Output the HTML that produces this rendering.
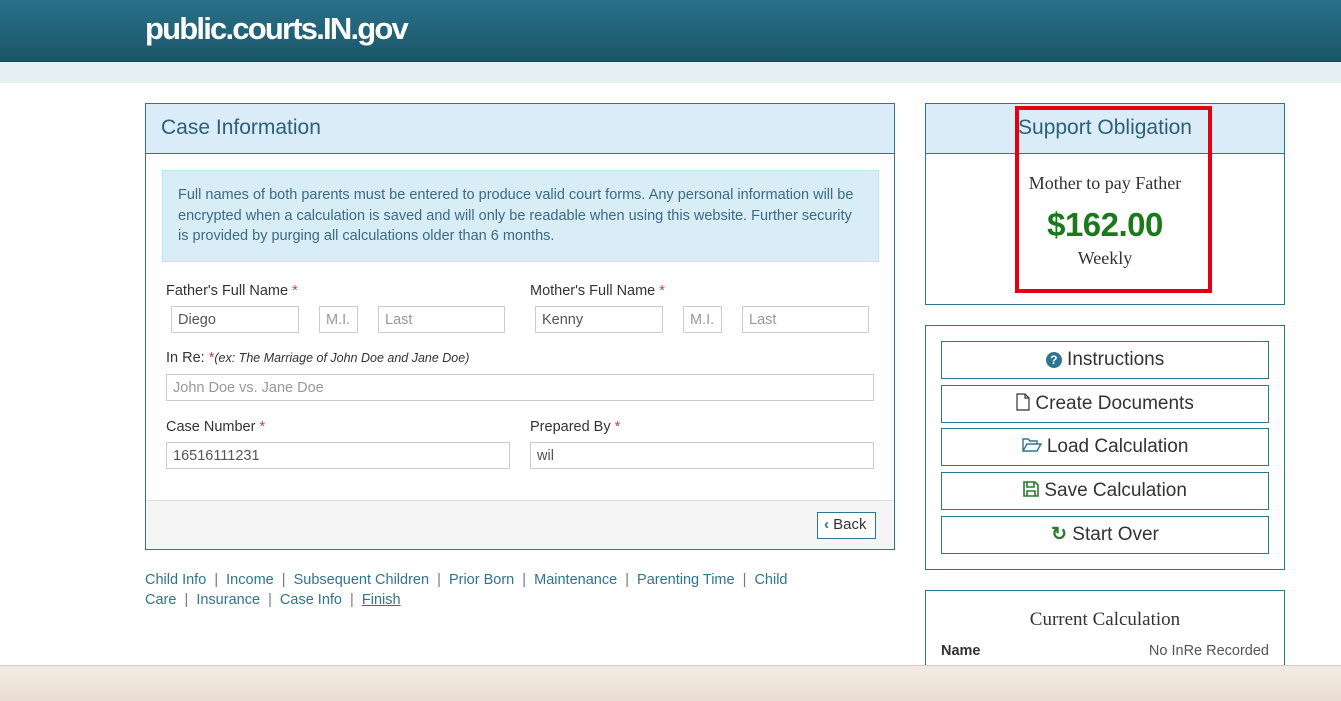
<!DOCTYPE html>
<html><head><meta charset="utf-8"><style>
*{box-sizing:border-box;margin:0;padding:0}
html,body{width:1341px;height:701px;overflow:hidden}
body{background:#fff;font-family:"Liberation Sans",sans-serif;color:#333;position:relative}
.hdr{position:absolute;left:0;top:0;width:1341px;height:62px;background:linear-gradient(#28718a,#1c5568);border-bottom:1px solid #174a5c}
.hdr span{position:absolute;left:145px;top:11px;font-size:31px;color:#fff;letter-spacing:-1.8px;font-weight:bold}
.strip{position:absolute;top:62px;left:0;width:1341px;height:21px;background:#e6eff1}
.foot{position:absolute;top:665px;left:0;width:1341px;height:36px;background:linear-gradient(#f3ebe2,#e9ddd1);border-top:1px solid #dcc8b3;z-index:5}
.panel{position:absolute;border:1px solid #2e7590;background:#fff}
.ph{background:#d9ecf7;border-bottom:1px solid #2e7590;height:50px;color:#2d5f7a;font-size:21px;padding:12px 15px}
.info{position:absolute;left:16px;top:66px;width:717px;height:92px;background:#d9edf7;border:1px solid #bce8f1;color:#3a6b84;font-size:14.5px;line-height:20.5px;padding:14px 15px}
.lbl{position:absolute;font-size:14.5px;color:#333}
.lbl i{color:#b94a48;font-style:normal}
.in{position:absolute;height:27px;border:1px solid #ccc;font-size:14.5px;padding:5px 6px;color:#555}
.ph2{color:#999}
.btn{position:absolute;left:15px;width:328px;height:38px;border:1px solid #2e7590;font-size:19px;color:#333;text-align:center;line-height:36px}
a{color:#2e7590;text-decoration:none}
</style></head><body>
<div class="hdr"><span>public.courts.IN.gov</span></div>
<div class="strip"></div>

<div class="panel" style="left:145px;top:103px;width:750px;height:447px">
<div class="ph">Case Information</div>
<div class="info">Full names of both parents must be entered to produce valid court forms. Any personal information will be encrypted when a calculation is saved and will only be readable when using this website. Further security is provided by purging all calculations older than 6 months.</div>
<div class="lbl" style="left:20px;top:179px">Father's Full Name <i>*</i></div>
<div class="in" style="left:25px;top:202px;width:128px">Diego</div>
<div class="in ph2" style="left:173px;top:202px;width:39px">M.I.</div>
<div class="in ph2" style="left:232px;top:202px;width:127px">Last</div>
<div class="lbl" style="left:384px;top:179px">Mother's Full Name <i>*</i></div>
<div class="in" style="left:389px;top:202px;width:128px">Kenny</div>
<div class="in ph2" style="left:537px;top:202px;width:39px">M.I.</div>
<div class="in ph2" style="left:596px;top:202px;width:127px">Last</div>
<div class="lbl" style="left:20px;top:246px"><b style="font-weight:normal">In Re:</b> <i>*</i><span style="font-style:italic;font-size:12.5px">(ex: The Marriage of John Doe and Jane Doe)</span></div>
<div class="in ph2" style="left:20px;top:270px;width:708px">John Doe vs. Jane Doe</div>
<div class="lbl" style="left:20px;top:315px">Case Number <i>*</i></div>
<div class="in" style="left:20px;top:338px;width:344px">16516111231</div>
<div class="lbl" style="left:384px;top:315px">Prepared By <i>*</i></div>
<div class="in" style="left:384px;top:338px;width:344px">wil</div>
<div style="position:absolute;left:0;top:396px;width:748px;height:49px;background:#f5f5f5;border-top:1px solid #ddd"></div>
<div style="position:absolute;left:671px;top:408px;width:59px;height:27px;border:1px solid #2e7590;background:#fff;font-size:15px;padding:3px 6px"><b style="color:#2e7590">‹</b> Back</div>
</div>

<div style="position:absolute;left:145px;top:570px;width:660px;font-size:14.5px;line-height:20px;color:#777">
<a>Child Info</a> &nbsp;|&nbsp; <a>Income</a> &nbsp;|&nbsp; <a>Subsequent Children</a> &nbsp;|&nbsp; <a>Prior Born</a> &nbsp;|&nbsp; <a>Maintenance</a> &nbsp;|&nbsp; <a>Parenting Time</a> &nbsp;|&nbsp; <a>Child Care</a> &nbsp;|&nbsp; <a>Insurance</a> &nbsp;|&nbsp; <a>Case Info</a> &nbsp;|&nbsp; <a style="text-decoration:underline">Finish</a></div>

<div class="panel" style="left:925px;top:103px;width:360px;height:202px">
<div class="ph" style="text-align:center">Support Obligation</div>
<div style="text-align:center;font-family:'Liberation Serif',serif;font-size:18px;margin-top:19px">Mother to pay Father</div>
<div style="text-align:center;font-size:33px;font-weight:bold;color:#1a7a1a;margin-top:12px;letter-spacing:-0.5px">$162.00</div>
<div style="text-align:center;font-family:'Liberation Serif',serif;font-size:18px;margin-top:4px">Weekly</div>
</div>
<div style="position:absolute;left:1015px;top:106px;width:197px;height:187px;border:4px solid #e3000f"></div>

<div class="panel" style="left:925px;top:325px;width:360px;height:245px">
<div class="btn" style="top:15px"><span style="display:inline-block;width:16px;height:16px;border-radius:50%;background:#2e7590;color:#fff;font-size:12px;line-height:16px;font-weight:bold;vertical-align:1px">?</span> Instructions</div>
<div class="btn" style="top:59px"><svg width="14" height="18" viewBox="0 0 14 18" style="vertical-align:-2px"><path d="M1 1h8l4 4v12H1z M9 1v4h4" fill="none" stroke="#333" stroke-width="1.2"/></svg> Create Documents</div>
<div class="btn" style="top:102px"><svg width="20" height="16" viewBox="0 0 20 16" style="vertical-align:-1px"><path d="M1 14V2h5l2 2h7v3 M1 14l4-7h14l-4 7z" fill="none" stroke="#2e7590" stroke-width="1.4"/></svg> Load Calculation</div>
<div class="btn" style="top:146px"><svg width="16" height="16" viewBox="0 0 16 16" style="vertical-align:-1px"><path d="M1 1h11l3 3v11H1z M4 1v5h7V1 M4 15v-5h8v5" fill="none" stroke="#2a7a2a" stroke-width="1.6"/></svg> Save Calculation</div>
<div class="btn" style="top:190px"><b style="color:#2a7a2a">↻</b> Start Over</div>
</div>

<div class="panel" style="left:925px;top:590px;width:360px;height:100px">
<div style="text-align:center;font-family:'Liberation Serif',serif;font-size:19px;margin-top:18px">Current Calculation</div>
<div style="position:absolute;left:15px;top:52px;font-size:14.5px;font-weight:bold">Name</div>
<div style="position:absolute;right:15px;top:52px;font-size:14.5px;color:#555">No InRe Recorded</div>
</div>
<div class="foot"></div>
</body></html>
